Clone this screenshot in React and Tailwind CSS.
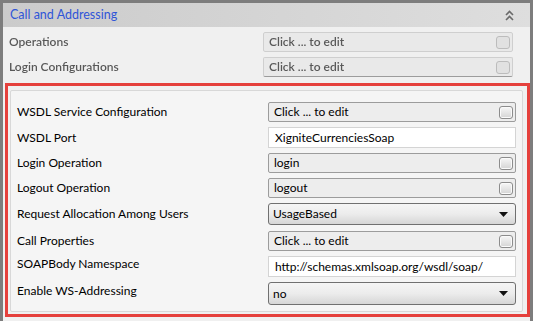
import React from "react";

const font = { fontFamily: 'Lato, "Noto Sans", sans-serif' };

function EditBtn() {
  return (
    <div className="w-[14px] h-[13px] rounded-[3px] border border-[#8c8c8c] bg-gradient-to-b from-[#f7f7f7] to-[#d4d4d4] shadow-[inset_0_0_0_1px_#fafafa]" />
  );
}

function ClickField({ text, h = "h-[20px]" }) {
  return (
    <div className={`flex items-center justify-between ${h} w-full border border-[#9c9c9c] rounded-[2px] bg-[#ededed] pl-[5px] pr-[2px]`}>
      <span className="text-[12px] text-black leading-none">{text}</span>
      <EditBtn />
    </div>
  );
}

function TextField({ text }) {
  return (
    <div className="flex items-center h-[21px] w-full border border-[#d4d4d4] bg-white pl-[6px]">
      <span className="text-[12px] text-black leading-none">{text}</span>
    </div>
  );
}

function SelectField({ text, h }) {
  return (
    <div className={`flex items-center justify-between ${h} w-full border border-[#707070] rounded-[3px] bg-gradient-to-b from-[#f5f5f5] via-[#ececec] to-[#d6d6d6] pl-[4px] pr-[7px]`}>
      <span className="text-[12px] text-black leading-none">{text}</span>
      <svg width="9" height="5" viewBox="0 0 9 5">
        <path d="M0 0 L9 0 L4.5 5 Z" fill="#111" />
      </svg>
    </div>
  );
}

function Row({ label, children, mt, labelOffset = "" }) {
  return (
    <div className={`flex items-center ${mt}`}>
      <div className={`w-[256px] pl-[5px] text-[12px] text-black leading-none ${labelOffset}`}>{label}</div>
      <div className="w-[248px]">{children}</div>
    </div>
  );
}

export default function App() {
  return (
    <div style={font} className="w-[533px] h-[321px] bg-[#7d7d7d] pt-[3px] pl-[3px] pr-[3px] overflow-hidden">
      <div className="h-[318px] bg-[#f0f0f0] flex flex-col">
        {/* Header */}
        <div className="h-[24px] flex items-center justify-between bg-gradient-to-r from-[#cbcbcb] to-[#dedede] pl-[7px] pr-[16px]">
          <span className="text-[12.5px] text-[#2f55d8] leading-none">Call and Addressing</span>
          <svg width="9" height="11" viewBox="0 0 9 11">
            <path d="M1 5 L4.5 1.5 L8 5" stroke="#6a6a6a" strokeWidth="1.6" fill="none" />
            <path d="M1 10 L4.5 6.5 L8 10" stroke="#6a6a6a" strokeWidth="1.6" fill="none" />
          </svg>
        </div>
        {/* Blurred top rows */}
        <div className="blur-[0.6px] opacity-80">
          <div className="flex items-center mt-[5px]">
            <div className="w-[260px] pl-[6px] text-[12px] text-[#333] leading-none font-semibold">Operations</div>
            <div className="w-[250px] flex items-center justify-between h-[20px] border border-[#c8c8c8] rounded-[2px] bg-[#e8e8e8] pl-[5px] pr-[2px]">
              <span className="text-[12px] text-[#333] leading-none font-semibold">Click ... to edit</span>
              <div className="w-[14px] h-[13px] rounded-[3px] border border-[#b0b0b0] bg-[#dedede]" />
            </div>
          </div>
          <div className="flex items-center mt-[5px]">
            <div className="w-[260px] pl-[6px] text-[12px] text-[#333] leading-none font-semibold">Login Configurations</div>
            <div className="w-[250px] flex items-center justify-between h-[20px] border border-[#c8c8c8] border-b-[#888] rounded-[2px] bg-[#e8e8e8] pl-[5px] pr-[2px]">
              <span className="text-[12px] text-[#333] leading-none font-semibold">Click ... to edit</span>
              <div className="w-[14px] h-[13px] rounded-[3px] border border-[#b0b0b0] bg-[#dedede]" />
            </div>
          </div>
        </div>
        {/* Red highlighted area */}
        <div className="mt-[6px] ml-[2px] border-[3px] border-[#e5403c] bg-[#f0f0f0] pt-[4px] pr-[4px] pl-[2px] pb-[2px]">
          <div className="border border-[#d8d8d8] rounded-[2px] bg-[#f5f5f5] pl-[1px] pt-[11px] pb-[6px] h-[222px]">
            <Row label="WSDL Service Configuration" mt="">
              <ClickField text="Click ... to edit" />
            </Row>
            <Row label="WSDL Port" mt="mt-[5px]">
              <TextField text="XigniteCurrenciesSoap" />
            </Row>
            <Row label="Login Operation" mt="mt-[5px]">
              <ClickField text="login" />
            </Row>
            <Row label="Logout Operation" mt="mt-[5px]">
              <ClickField text="logout" />
            </Row>
            <Row label="Request Allocation Among Users" mt="mt-[5px]">
              <SelectField text="UsageBased" h="h-[22px]" />
            </Row>
            <Row label="Call Properties" mt="mt-[6px]">
              <ClickField text="Click ... to edit" />
            </Row>
            <Row label="SOAPBody Namespace" mt="mt-[5px]" labelOffset="-translate-y-[3px]">
              <TextField text="http://schemas.xmlsoap.org/wsdl/soap/" />
            </Row>
            <Row label="Enable WS-Addressing" mt="mt-[5px]" labelOffset="-translate-y-[3px]">
              <SelectField text="no" h="h-[23px]" />
            </Row>
          </div>
        </div>
      </div>
    </div>
  );
}
